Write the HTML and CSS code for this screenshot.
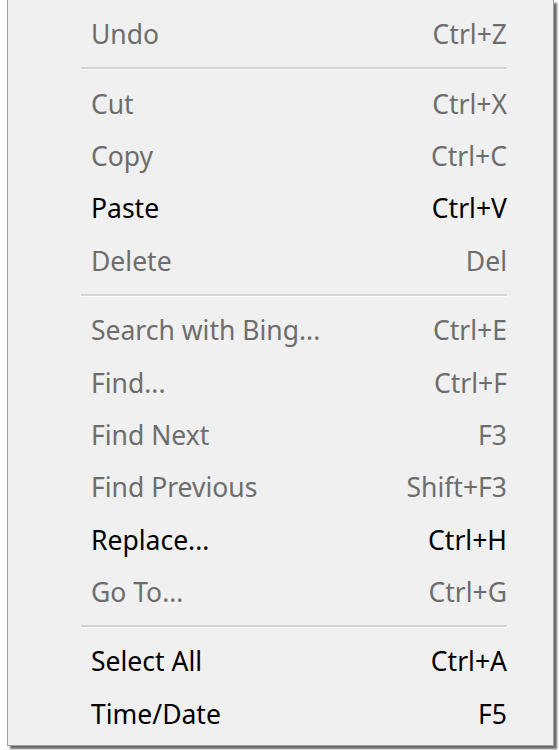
FILE: index.html
```html
<!DOCTYPE html>
<html>
<head>
<meta charset="utf-8">
<link rel="stylesheet" href="styles.css">
</head>
<body>
<div class="menu">
  <div class="item disabled"><span>Undo</span><span>Ctrl+Z</span></div>
  <div class="sep"></div>
  <div class="item disabled"><span>Cut</span><span>Ctrl+X</span></div>
  <div class="item disabled"><span>Copy</span><span>Ctrl+C</span></div>
  <div class="item"><span>Paste</span><span>Ctrl+V</span></div>
  <div class="item disabled"><span>Delete</span><span>Del</span></div>
  <div class="sep"></div>
  <div class="item disabled"><span>Search with Bing...</span><span>Ctrl+E</span></div>
  <div class="item disabled"><span>Find...</span><span>Ctrl+F</span></div>
  <div class="item disabled"><span>Find Next</span><span>F3</span></div>
  <div class="item disabled"><span>Find Previous</span><span>Shift+F3</span></div>
  <div class="item"><span>Replace...</span><span>Ctrl+H</span></div>
  <div class="item disabled"><span>Go To...</span><span>Ctrl+G</span></div>
  <div class="sep"></div>
  <div class="item"><span>Select All</span><span>Ctrl+A</span></div>
  <div class="item"><span>Time/Date</span><span>F5</span></div>
</div>
</body>
</html>
```
FILE: styles.css
```css
html, body {
  margin: 0;
  padding: 0;
  background: #ffffff;
}
body {
  width: 559px;
  height: 750px;
  overflow: hidden;
}
.menu {
  margin-left: 7px;
  width: 545px;
  background: #f0f0f0;
  border: 1px solid #a0a0a0;
  border-top: none;
  padding: 8px 0 5px 0;
  box-shadow: 3px 3px 2px #6a6a6a;
  font-family: "Noto Sans", "Open Sans", sans-serif;
  font-size: 26.5px;
  color: #000;
}
.item {
  height: 52.4px;
  display: flex;
  justify-content: space-between;
  align-items: center;
  padding: 0 46px 0 83px;
}
.disabled {
  color: #6d6d6d;
}
.sep {
  height: 2px;
  margin: 7px 46px 7px 73px;
  background: #d4d4d4;
  border-bottom: 1px solid #fbfbfb;
}
```
